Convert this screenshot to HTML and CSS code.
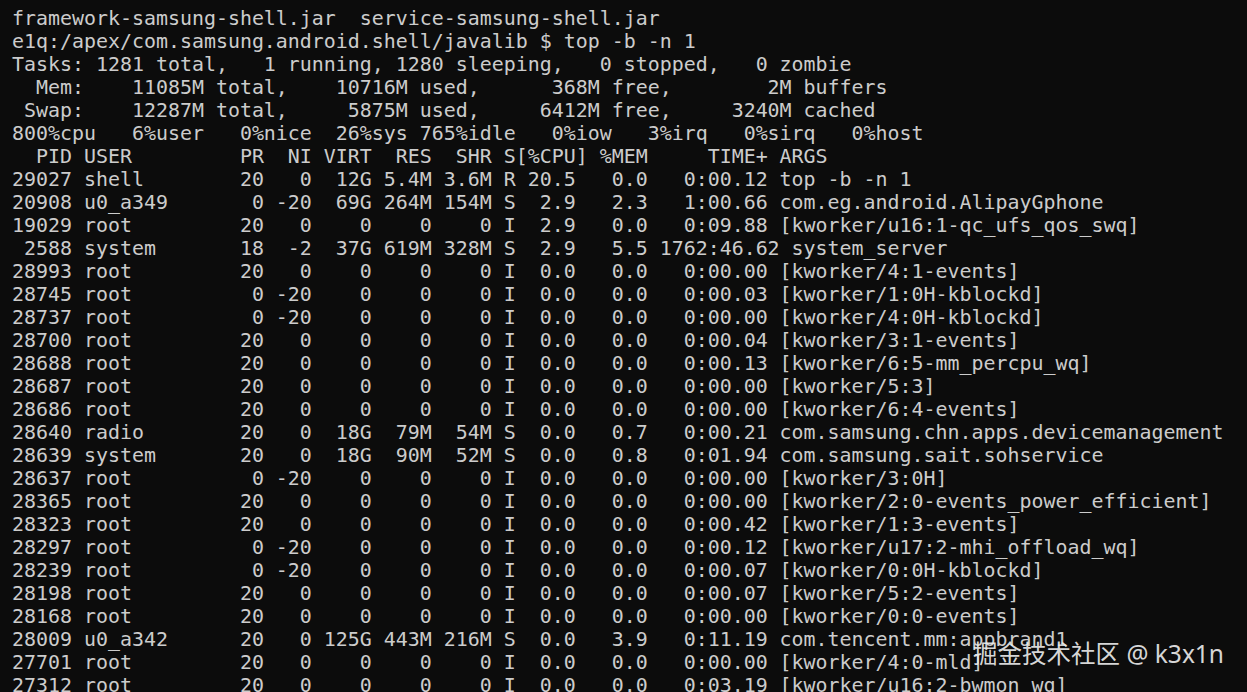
FILE: index.html
```html
<!DOCTYPE html>
<html lang="zh-CN">
<head>
<meta charset="utf-8">
<title>top -b -n 1</title>
<link rel="stylesheet" href="styles.css">
</head>
<body>
<div class="window">
<pre class="term">framework-samsung-shell.jar  service-samsung-shell.jar
e1q:/apex/com.samsung.android.shell/javalib $ top -b -n 1
Tasks: 1281 total,   1 running, 1280 sleeping,   0 stopped,   0 zombie
  Mem:    11085M total,    10716M used,      368M free,        2M buffers
 Swap:    12287M total,     5875M used,     6412M free,     3240M cached
800%cpu   6%user   0%nice  26%sys 765%idle   0%iow   3%irq   0%sirq   0%host
  PID USER         PR  NI VIRT  RES  SHR S[%CPU] %MEM     TIME+ ARGS
29027 shell        20   0  12G 5.4M 3.6M R 20.5   0.0   0:00.12 top -b -n 1
20908 u0_a349       0 -20  69G 264M 154M S  2.9   2.3   1:00.66 com.eg.android.AlipayGphone
19029 root         20   0    0    0    0 I  2.9   0.0   0:09.88 [kworker/u16:1-qc_ufs_qos_swq]
 2588 system       18  -2  37G 619M 328M S  2.9   5.5 1762:46.62 system_server
28993 root         20   0    0    0    0 I  0.0   0.0   0:00.00 [kworker/4:1-events]
28745 root          0 -20    0    0    0 I  0.0   0.0   0:00.03 [kworker/1:0H-kblockd]
28737 root          0 -20    0    0    0 I  0.0   0.0   0:00.00 [kworker/4:0H-kblockd]
28700 root         20   0    0    0    0 I  0.0   0.0   0:00.04 [kworker/3:1-events]
28688 root         20   0    0    0    0 I  0.0   0.0   0:00.13 [kworker/6:5-mm_percpu_wq]
28687 root         20   0    0    0    0 I  0.0   0.0   0:00.00 [kworker/5:3]
28686 root         20   0    0    0    0 I  0.0   0.0   0:00.00 [kworker/6:4-events]
28640 radio        20   0  18G  79M  54M S  0.0   0.7   0:00.21 com.samsung.chn.apps.devicemanagement
28639 system       20   0  18G  90M  52M S  0.0   0.8   0:01.94 com.samsung.sait.sohservice
28637 root          0 -20    0    0    0 I  0.0   0.0   0:00.00 [kworker/3:0H]
28365 root         20   0    0    0    0 I  0.0   0.0   0:00.00 [kworker/2:0-events_power_efficient]
28323 root         20   0    0    0    0 I  0.0   0.0   0:00.42 [kworker/1:3-events]
28297 root          0 -20    0    0    0 I  0.0   0.0   0:00.12 [kworker/u17:2-mhi_offload_wq]
28239 root          0 -20    0    0    0 I  0.0   0.0   0:00.07 [kworker/0:0H-kblockd]
28198 root         20   0    0    0    0 I  0.0   0.0   0:00.07 [kworker/5:2-events]
28168 root         20   0    0    0    0 I  0.0   0.0   0:00.00 [kworker/0:0-events]
28009 u0_a342      20   0 125G 443M 216M S  0.0   3.9   0:11.19 com.tencent.mm:appbrand1
27701 root         20   0    0    0    0 I  0.0   0.0   0:00.00 [kworker/4:0-mld]
27312 root         20   0    0    0    0 I  0.0   0.0   0:03.19 [kworker/u16:2-bwmon_wq]</pre>
<div class="watermark">掘金技术社区 @ k3x1n</div>
</div>
</body>
</html>
```

FILE: styles.css
```css
html, body {
  margin: 0;
  padding: 0;
  background: #0c0c0c;
  overflow: hidden;
}

.window {
  position: relative;
  width: 1247px;
  height: 692px;
  background: #0c0c0c;
  overflow: hidden;
}

.term {
  margin: 0;
  padding: 7px 0 0 12px;
  font-family: "DejaVu Sans Mono", "Liberation Mono", monospace;
  font-size: 19.93px;
  line-height: 23px;
  color: #cccccc;
  white-space: pre;
}

.watermark {
  position: absolute;
  top: 640px;
  right: 23px;
  font-family: "Noto Sans", "Noto Sans CJK SC", sans-serif;
  font-size: 24.5px;
  line-height: 28px;
  color: rgba(235, 235, 235, 0.92);
  white-space: nowrap;
}
```
